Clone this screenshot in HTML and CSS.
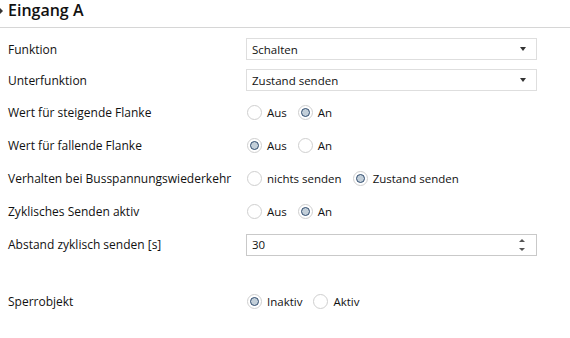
FILE: index.html
```html
<!DOCTYPE html>
<html>
<head>
<meta charset="utf-8">
<link rel="stylesheet" href="styles.css">
</head>
<body>
<div class="header">
  <span class="caret"></span>
  <span class="title">Eingang A</span>
</div>
<div class="form">
  <div class="row r1">
    <div class="label">Funktion</div>
    <div class="select"><span>Schalten</span><span class="tri"></span></div>
  </div>
  <div class="row r2">
    <div class="label">Unterfunktion</div>
    <div class="select"><span>Zustand senden</span><span class="tri"></span></div>
  </div>
  <div class="row">
    <div class="label">Wert für steigende Flanke</div>
    <div class="radios">
      <span class="radio"></span><span class="opt">Aus</span>
      <span class="radio on"></span><span class="opt">An</span>
    </div>
  </div>
  <div class="row">
    <div class="label">Wert für fallende Flanke</div>
    <div class="radios">
      <span class="radio on"></span><span class="opt">Aus</span>
      <span class="radio"></span><span class="opt">An</span>
    </div>
  </div>
  <div class="row">
    <div class="label">Verhalten bei Busspannungswiederkehr</div>
    <div class="radios">
      <span class="radio"></span><span class="opt">nichts senden</span>
      <span class="radio on"></span><span class="opt">Zustand senden</span>
    </div>
  </div>
  <div class="row">
    <div class="label">Zyklisches Senden aktiv</div>
    <div class="radios">
      <span class="radio"></span><span class="opt">Aus</span>
      <span class="radio on"></span><span class="opt">An</span>
    </div>
  </div>
  <div class="row">
    <div class="label">Abstand zyklisch senden [s]</div>
    <div class="select spin"><span>30</span><span class="spinbtns"><span class="up"></span><span class="down"></span></span></div>
  </div>
  <div class="row r8">
    <div class="label">Sperrobjekt</div>
    <div class="radios">
      <span class="radio on"></span><span class="opt">Inaktiv</span>
      <span class="radio"></span><span class="opt">Aktiv</span>
    </div>
  </div>
</div>
</body>
</html>
```
FILE: styles.css
```css
* { box-sizing: border-box; }
html, body { margin: 0; padding: 0; background: #fff; }
body {
  width: 570px; height: 338px; overflow: hidden;
  font-family: "Open Sans", "Noto Sans", sans-serif;
  color: #111;
}
.header {
  height: 28px;
  border-bottom: 1px solid #d6d6d6;
  display: flex; align-items: flex-start;
}
.caret {
  width: 0; height: 0;
  border-top: 3px solid transparent;
  border-bottom: 3px solid transparent;
  border-left: 3px solid #333;
  margin-right: 5px;
  margin-top: 8px;
}
.title {
  font-size: 16px; font-weight: 600; color: #111;
  line-height: 20px;
}
.form { padding-top: 6px; }
.row {
  display: flex; align-items: center;
  height: 33px;
}
.r1 { height: 30px; }
.r2 { height: 32px; }
.r8 { margin-top: 24px; }
.label {
  width: 246px; padding-left: 8px;
  font-size: 12px; color: #111;
}
.select {
  width: 291px; height: 22px;
  border: 1px solid #dedede;
  display: flex; align-items: center; justify-content: space-between;
  padding: 0 10px 0 5px;
  font-size: 11.5px;
}
.tri {
  width: 0; height: 0;
  border-left: 3.5px solid transparent;
  border-right: 3.5px solid transparent;
  border-top: 4px solid #333;
}
.spin { border-color: #c9c9c9; }
.spinbtns { display: flex; flex-direction: column; gap: 6px; margin-right: 1px; }
.up, .down {
  width: 0; height: 0;
  border-left: 3px solid transparent;
  border-right: 3px solid transparent;
}
.up { border-bottom: 3px solid #555; }
.down { border-top: 3px solid #555; }
.radios { display: flex; align-items: center; font-size: 11.5px; padding-left: 1px; }
.radio {
  width: 15px; height: 15px; border-radius: 50%;
  border: 1px solid #cfcfcf; background: #fff;
  display: inline-flex; align-items: center; justify-content: center;
  margin-right: 5px;
}
.radio.on::after {
  content: ""; width: 9px; height: 9px; border-radius: 50%;
  background: #c3cfd9; border: 1px solid #2f4b6e;
  box-sizing: border-box;
}
.opt { margin-right: 11px; }
```
